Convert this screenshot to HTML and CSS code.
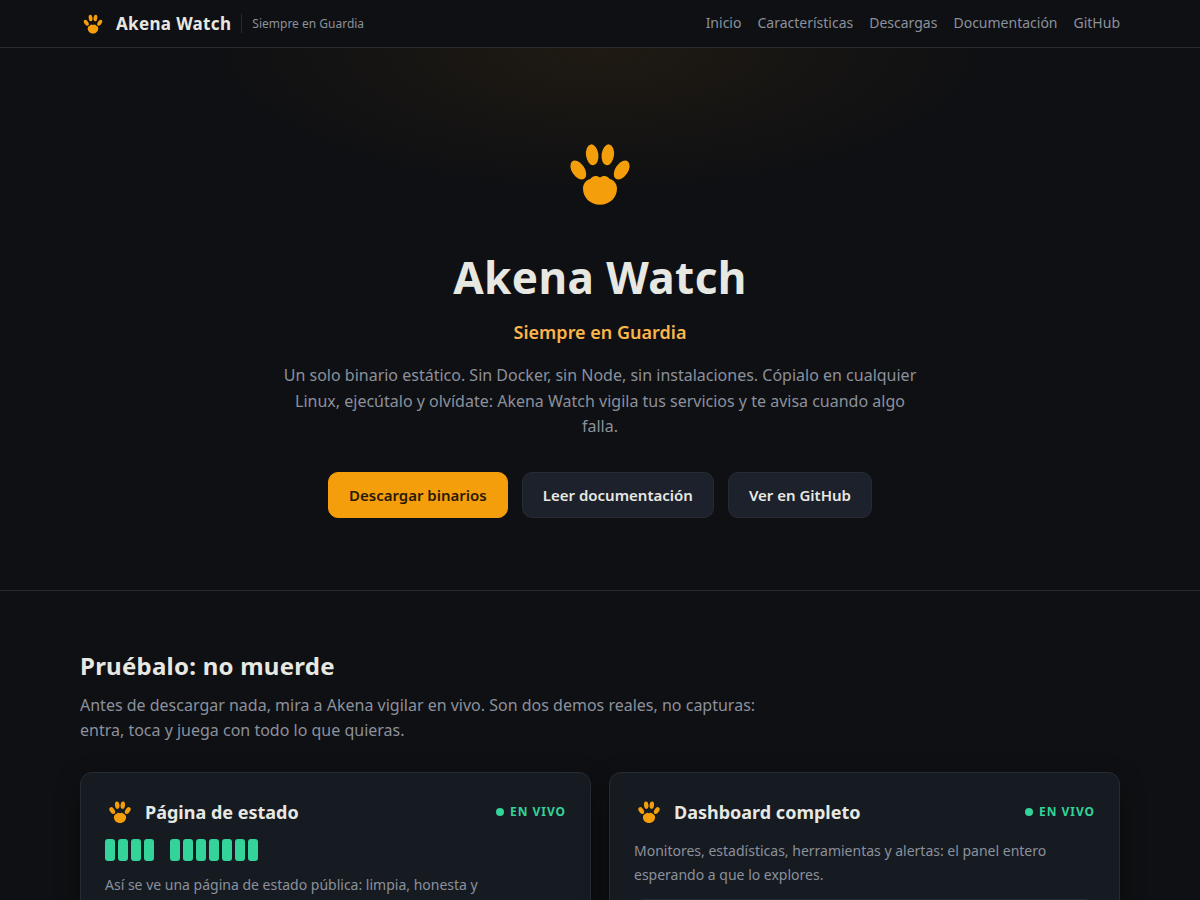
FILE: index.html
```html
<!DOCTYPE html>
<html lang="es">

<head>
    <meta charset="UTF-8">
    <meta name="viewport" content="width=device-width, initial-scale=1.0">
    <title>Akena Watch - Siempre en Guardia</title>
    <link rel="stylesheet" href="styles.css">
</head>

<body>

    <!-- Paw logo, reused across the page -->
    <svg class="sprite" aria-hidden="true">
        <symbol id="paw" viewBox="0 0 84 84">
            <ellipse cx="34.2" cy="22.8" rx="6.2" ry="10.5" transform="rotate(-7 34.2 22.8)"/>
            <ellipse cx="49.8" cy="22.8" rx="6.2" ry="10.5" transform="rotate(7 49.8 22.8)"/>
            <ellipse cx="20.3" cy="38" rx="6.4" ry="10.6" transform="rotate(-34 20.3 38)"/>
            <ellipse cx="63.700" cy="38" rx="6.4" ry="10.6" transform="rotate(34 63.7 38)"/>
            <path d="M42 45.6c-2.500-2.400-7.400-2.400-9.700 1.300-4.400.9-7.300 5-7.300 9.700C25 66 32.600 72.800 42 72.800S59 66 59 56.600c0-4.700-2.900-8.800-7.300-9.700-2.300-3.700-7.200-3.700-9.700-1.300z"/>
        </symbol>
    </svg>

    <header class="topbar">
        <div class="container topbar-inner">
            <a class="brand" href="#inicio">
                <svg class="paw paw-small" aria-hidden="true"><use href="#paw"/></svg>
                <span class="brand-name">Akena Watch</span>
                <span class="brand-tag">Siempre en Guardia</span>
            </a>
            <nav class="nav">
                <a href="#inicio">Inicio</a>
                <a href="#caracteristicas">Características</a>
                <a href="#descargas">Descargas</a>
                <a href="#documentacion">Documentación</a>
                <a href="#github">GitHub</a>
            </nav>
        </div>
    </header>

    <main>
        <section class="hero" id="inicio">
            <svg class="paw paw-hero" aria-hidden="true"><use href="#paw"/></svg>
            <h1>Akena Watch</h1>
            <p class="tagline">Siempre en Guardia</p>
            <p class="lead">Un solo binario estático. Sin Docker, sin Node, sin instalaciones. Cópialo en cualquier Linux, ejecútalo y olvídate: Akena Watch vigila tus servicios y te avisa cuando algo falla.</p>
            <div class="actions">
                <a class="btn btn-primary" href="#descargas">Descargar binarios</a>
                <a class="btn" href="#documentacion">Leer documentación</a>
                <a class="btn" href="#github">Ver en GitHub</a>
            </div>
        </section>

        <section class="container demos">
            <h2>Pruébalo: no muerde</h2>
            <p class="section-lead">Antes de descargar nada, mira a Akena vigilar en vivo. Son dos demos reales, no capturas: entra, toca y juega con todo lo que quieras.</p>

            <div class="demo-grid">
                <article class="card">
                    <div class="card-head">
                        <svg class="paw paw-card" aria-hidden="true"><use href="#paw"/></svg>
                        <h3>Página de estado</h3>
                        <span class="live">EN VIVO</span>
                    </div>
                    <div class="bars">
                        <i></i><i></i><i></i><i></i><i class="off"></i><i></i><i></i><i></i><i></i><i></i><i></i><i></i>
                    </div>
                    <p>Así se ve una página de estado pública: limpia, honesta y</p>
                </article>

                <article class="card">
                    <div class="card-head">
                        <svg class="paw paw-card" aria-hidden="true"><use href="#paw"/></svg>
                        <h3>Dashboard completo</h3>
                        <span class="live">EN VIVO</span>
                    </div>
                    <p>Monitores, estadísticas, herramientas y alertas: el panel entero esperando a que lo explores.</p>
                    <div class="access"></div>
                </article>
            </div>
        </section>
    </main>

</body>

</html>
```
FILE: styles.css
```css
:root {
    --bg: #0f1013;
    --card: #161b22;
    --button: #1d212b;
    --border: #272b33;
    --text: #e8e8e3;
    --muted: #8b909c;
    --amber: #f59e0b;
    --green: #34d399;
}

* {
    box-sizing: border-box;
    margin: 0;
    padding: 0;
}

body {
    height: 100vh;
    overflow: hidden;
    background-color: var(--bg);
    color: var(--text);
    font-family: 'Noto Sans', sans-serif;
    font-size: 16px;
    line-height: 1.6;
}

a {
    color: inherit;
    text-decoration: none;
}

.sprite {
    display: none;
}

.container {
    width: 100%;
    max-width: 1088px;
    margin: 0 auto;
    padding: 0 24px;
}

.paw {
    display: block;
    flex: none;
    fill: var(--amber);
}

.paw-small {
    width: 26px;
    height: 26px;
}

.paw-card {
    width: 30px;
    height: 30px;
}

.paw-hero {
    width: 84px;
    height: 84px;
    margin: 0 auto 26px;
}

/* Top bar */
.topbar {
    border-bottom: 1px solid var(--border);
}

.topbar-inner {
    display: flex;
    justify-content: space-between;
    align-items: center;
    padding-top: 10px;
    padding-bottom: 10px;
}

.brand {
    display: flex;
    align-items: center;
    gap: 10px;
}

.brand-name {
    font-size: 17px;
    font-weight: 700;
    line-height: 27px;
    letter-spacing: 0.02em;
}

.brand-tag {
    padding-left: 10px;
    border-left: 1px solid var(--border);
    color: var(--muted);
    font-size: 12px;
}

.nav {
    display: flex;
    gap: 16px;
    color: var(--muted);
    font-size: 14px;
}

.nav a:hover {
    color: var(--text);
}

/* Hero */
.hero {
    padding: 84px 24px 72px;
    border-bottom: 1px solid var(--border);
    background: radial-gradient(ellipse 390px 145px at 50% 0, rgba(245, 158, 11, 0.07), transparent);
    text-align: center;
}

.hero h1 {
    font-size: 44px;
    font-weight: 700;
    line-height: 70px;
    letter-spacing: 0.01em;
}

.tagline {
    margin-top: 6px;
    color: #fbb54a;
    font-size: 18px;
    font-weight: 600;
    line-height: 29px;
}

.lead {
    max-width: 640px;
    margin: 16px auto 32px;
    color: var(--muted);
}

.actions {
    display: flex;
    justify-content: center;
    flex-wrap: wrap;
    gap: 14px;
}

.btn {
    padding: 10px 20px;
    border: 1px solid var(--border);
    border-radius: 10px;
    background-color: var(--button);
    font-size: 15px;
    font-weight: 600;
}

.btn-primary {
    border-color: var(--amber);
    background-color: var(--amber);
    color: #2a1a05;
}

/* Demos */
.demos {
    padding-top: 56px;
}

.demos h2 {
    margin-bottom: 8px;
    font-size: 24px;
    font-weight: 700;
    line-height: 38px;
    letter-spacing: 0.01em;
}

.section-lead {
    max-width: 680px;
    margin-bottom: 28px;
    color: var(--muted);
}

.demo-grid {
    display: grid;
    grid-template-columns: 1fr 1fr;
    gap: 18px;
}

.card {
    min-height: 260px;
    padding: 24px;
    border: 1px solid var(--border);
    border-radius: 12px;
    background-color: var(--card);
    box-shadow: 0 8px 24px rgba(0, 0, 0, 0.35);
}

.card-head {
    display: flex;
    align-items: center;
    gap: 10px;
    margin-bottom: 12px;
}

.card h3 {
    font-size: 18px;
    font-weight: 700;
}

.card p {
    color: var(--muted);
    font-size: 14px;
    line-height: 24px;
}

.live {
    display: flex;
    align-items: center;
    gap: 6px;
    margin-left: auto;
    color: var(--green);
    font-size: 12px;
    font-weight: 700;
    letter-spacing: 0.08em;
}

.live::before {
    content: "";
    width: 8px;
    height: 8px;
    border-radius: 50%;
    background-color: var(--green);
}

.bars {
    display: flex;
    gap: 3px;
    margin-bottom: 12px;
}

.bars i {
    width: 10px;
    height: 22px;
    border-radius: 3px;
    background-color: var(--green);
}

.bars .off {
    opacity: 0;
}

.access {
    height: 80px;
    margin-top: 12px;
    border: 1px solid var(--border);
    border-radius: 10px;
    background-color: var(--button);
}

@media (max-width: 800px) {
    .demo-grid {
        grid-template-columns: 1fr;
    }

    .brand-tag {
        display: none;
    }
}
```
